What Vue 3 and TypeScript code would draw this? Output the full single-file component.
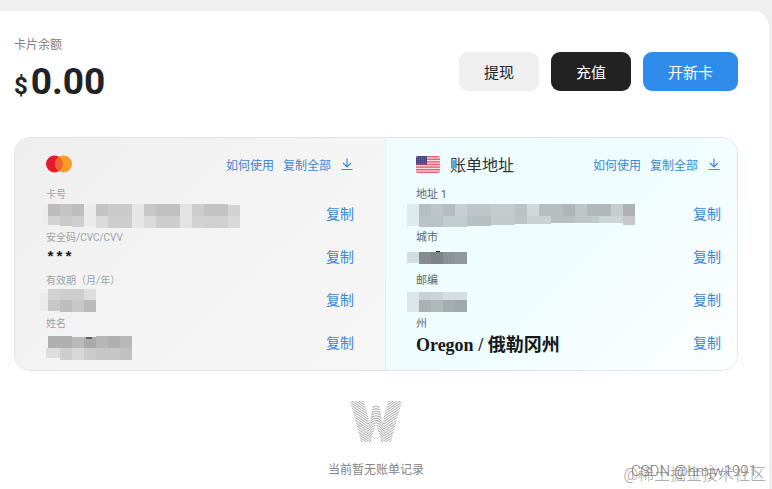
<script setup lang="ts">
type Block = [x: number, y: number, w: number, h: number, fill: string]

interface Field {
  label: string
  text?: string
  kind?: 'dots' | 'state'
  mask?: Block[]
}

const cardFields: Field[] = [
  {
    label: '卡号',
    mask: [
      [-4, 4, 6, 18, '#ececec'], [2, 2, 12, 12, '#bcbcbd'], [14, 2, 12, 12, '#c4c4c5'], [26, 2, 12, 12, '#bebebf'],
      [2, 14, 12, 9, '#d2d2d2'], [14, 14, 12, 10, '#cacaca'], [26, 14, 12, 11, '#cfcfcf'], [38, 2, 12, 22, '#ebebeb'],
      [50, 2, 12, 12, '#c3c3c3'], [62, 2, 24, 12, '#cacaca'], [50, 14, 12, 12, '#dadada'], [62, 14, 24, 12, '#cdcdcd'],
      [86, 2, 12, 24, '#e6e6e6'], [98, 2, 12, 12, '#c7c7c7'], [110, 2, 24, 12, '#c0c0c0'],
      [98, 14, 12, 12, '#dadada'], [110, 14, 24, 12, '#cdcdcd'], [134, 2, 12, 24, '#e3e3e3'],
      [146, 2, 12, 12, '#cdcdcd'], [146, 14, 12, 12, '#d2d2d2'], [158, 2, 24, 12, '#c3c3c3'], [158, 14, 24, 12, '#d0d0d0'],
      [182, 3, 12, 11, '#d2d2d2'], [182, 14, 12, 12, '#d9d9d9'],
    ],
  },
  { label: '安全码/CVC/CVV', text: '***', kind: 'dots' },
  {
    label: '有效期（月/年）',
    mask: [
      [-6, 5, 8, 18, '#ebebeb'], [2, 1, 12, 12, '#d1d1d1'], [14, 1, 24, 12, '#cdcdcd'], [38, 1, 12, 12, '#dddddd'],
      [2, 12, 12, 11, '#c6c6c6'], [14, 12, 12, 12, '#bebebe'], [26, 12, 12, 12, '#c8c8c8'], [38, 12, 12, 12, '#bababa'],
    ],
  },
  {
    label: '姓名',
    mask: [
      [2, 5, 24, 12, '#b0b0b0'], [26, 6, 12, 11, '#bababa'], [38, 6, 12, 11, '#aaaaaa'], [40, 6, 6, 2, '#626262'],
      [50, 5, 12, 12, '#b7b7b7'], [62, 5, 12, 12, '#afafaf'], [74, 5, 12, 12, '#b8b8b8'],
      [0, 17, 14, 10, '#dddddd'], [14, 17, 12, 12, '#cdcdcd'], [26, 17, 12, 12, '#d8d8d8'], [38, 17, 12, 12, '#cccccc'],
      [50, 17, 24, 12, '#c6c6c6'], [74, 17, 12, 12, '#c0c0c0'],
    ],
  },
]

const addressFields: Field[] = [
  {
    label: '地址 1',
    mask: [
      [-9, 2, 12, 22, '#dfeaec'], [3, 2, 12, 12, '#b5bec0'], [15, 2, 12, 12, '#bcc6c8'], [27, 2, 12, 12, '#b4bdbf'],
      [39, 2, 12, 12, '#c6d0d2'], [51, 2, 24, 12, '#bdc7c9'], [75, 2, 24, 12, '#c2cccd'], [99, 2, 12, 12, '#b9c2c4'],
      [111, 2, 12, 12, '#cfd9da'], [123, 2, 24, 12, '#b7bebf'], [147, 2, 12, 12, '#b0b6b7'], [159, 2, 12, 12, '#bfc6c7'],
      [171, 2, 24, 12, '#b2b7b8'], [195, 2, 12, 12, '#c7cccd'], [207, 2, 12, 12, '#adb2b3'],
      [3, 14, 24, 11, '#b8c3c4'], [27, 14, 24, 11, '#c1cccd'], [51, 14, 24, 10, '#b7c1c2'], [75, 14, 24, 9, '#c1cbcc'],
      [99, 14, 12, 8, '#bcc5c6'], [111, 14, 24, 8, '#c9d2d3'], [135, 14, 24, 7, '#b7bebf'], [159, 14, 24, 7, '#c2c8c9'],
      [183, 14, 24, 7, '#cdd4d5'], [207, 14, 12, 9, '#c3c9ca'],
    ],
  },
  {
    label: '城市',
    mask: [
      [-9, 7, 12, 11, '#d3dcde'], [3, 7, 12, 12, '#858b8d'], [15, 7, 12, 12, '#7d8486'], [27, 7, 12, 12, '#8d9395'],
      [39, 7, 12, 12, '#92999b'], [20, 6, 4, 1, '#20282b'],
    ],
  },
  {
    label: '邮编',
    mask: [
      [-9, 4, 12, 20, '#dce6e8'], [3, 4, 12, 8, '#c8d2d4'], [15, 4, 12, 8, '#cbd5d7'], [27, 4, 24, 8, '#d4dddf'],
      [3, 12, 12, 12, '#a8b1b3'], [15, 12, 12, 12, '#b0b8ba'], [27, 12, 12, 12, '#a4acae'], [39, 12, 12, 12, '#a1a8aa'],
    ],
  },
  { label: '州', text: 'Oregon / 俄勒冈州', kind: 'state' },
]

const panels = [
  { id: 'bank', fields: cardFields },
  { id: 'address', fields: addressFields },
]

const waves = Array.from({ length: 26 }, (_, i) => {
  const y = i * 2.4 - 16
  return `M-4 ${y}L18 ${y + 15}Q26 ${y + 3} 34 ${y + 15}L56 ${y}`
})
</script>

<template>
  <main class="page">
    <header class="top">
      <div>
        <div class="caption">卡片余额</div>
        <div class="amount"><span class="currency">$</span>0.00</div>
      </div>
      <div class="actions">
        <button type="button" class="btn light">提现</button>
        <button type="button" class="btn dark">充值</button>
        <button type="button" class="btn blue">开新卡</button>
      </div>
    </header>

    <section class="card">
      <div v-for="panel in panels" :key="panel.id" class="panel" :class="panel.id">
        <div class="head">
          <svg v-if="panel.id === 'bank'" class="brand" viewBox="0 0 26 18" aria-hidden="true">
            <circle cx="8.5" cy="9" r="8.5" fill="#e31b2d" />
            <circle cx="17.5" cy="9" r="8.5" fill="#fb9d2b" />
            <path d="M13 1.8a8.5 8.5 0 0 1 0 14.4a8.5 8.5 0 0 1 0-14.4z" fill="#f2642b" />
          </svg>
          <template v-else>
            <svg class="flag" viewBox="0 0 24 17" aria-hidden="true">
              <clipPath id="flag-shape"><rect width="24" height="17" rx="2" /></clipPath>
              <g clip-path="url(#flag-shape)">
                <rect width="24" height="17" fill="#f8dce1" />
                <rect v-for="n in 7" :key="n" y="0" width="24" height="1.4" :transform="`translate(0 ${(n - 1) * 2.6})`" fill="#e4616f" />
                <rect width="11" height="8.6" fill="#46477f" />
                <g fill="#a9a9cb">
                  <template v-for="r in 4" :key="r">
                    <circle v-for="c in 5" :key="c" :cx="c * 2 - 0.8" :cy="r * 2 - 0.8" r="0.4" />
                  </template>
                </g>
              </g>
            </svg>
            <h2 class="title">账单地址</h2>
          </template>
          <nav class="links">
            <a href="#">如何使用</a>
            <a href="#">复制全部</a>
            <button type="button" class="download" aria-label="下载">
              <svg viewBox="0 0 12 12" aria-hidden="true">
                <path d="M6 .5V9M2 5L6 9L10 5M.5 11.5H11.500" fill="none" stroke="currentColor" stroke-width="1.2" />
              </svg>
            </button>
          </nav>
        </div>

        <dl class="fields">
          <div v-for="field in panel.fields" :key="field.label" class="field">
            <dt>{{ field.label }}</dt>
            <dd>
              <svg v-if="field.mask" class="mask" aria-hidden="true">
                <rect
                  v-for="(b, i) in field.mask"
                  :key="i"
                  :x="b[0]"
                  :y="b[1]"
                  :width="b[2]"
                  :height="b[3]"
                  :fill="b[4]"
                />
              </svg>
              <span v-else class="value" :class="field.kind">{{ field.text }}</span>
              <button type="button" class="copy">复制</button>
            </dd>
          </div>
        </dl>
      </div>
    </section>

    <section class="empty">
      <svg class="logo" viewBox="0 0 52 41" aria-hidden="true">
        <clipPath id="w-shape">
          <path d="M0 0H14L19.500 22L23 4H29L32.500 22L38 0H52L41 41H31L26 22L21 41H11Z" />
        </clipPath>
        <g clip-path="url(#w-shape)" fill="none" stroke="#8f8f8f" stroke-width="0.8">
          <path v-for="d in waves" :key="d" :d="d" />
        </g>
      </svg>
      <p>当前暂无账单记录</p>
    </section>

    <div class="mark community">@稀土掘金技术社区</div>
    <div class="mark author">CSDN @hmjw1991</div>
  </main>
</template>

<style>
body {
  background: #efefef;
}
</style>

<style scoped>
.page {
  position: relative;
  box-sizing: border-box;
  min-height: calc(100vh - 11px);
  margin: 11px 3px 0 0;
  padding: 26px 31px 0 14px;
  border-radius: 0 16px 0 0;
  background: #fff;
  color: #202326;
  font-family: Roboto, "Noto Sans CJK SC", sans-serif;
}

button {
  padding: 0;
  border: 0;
  background: none;
  font: inherit;
  cursor: pointer;
}

.top {
  display: flex;
  align-items: center;
  justify-content: space-between;
  margin-bottom: 31px;
}

.caption {
  margin-bottom: 5px;
  color: #808080;
  font-size: 12px;
  line-height: 16px;
}

.amount {
  display: flex;
  align-items: baseline;
  gap: 3px;
  height: 48px;
  font-size: 37px;
  font-weight: 700;
  line-height: 48px;
}

.currency {
  font-size: 24px;
}

.actions {
  display: flex;
  gap: 12px;
}

.btn {
  height: 39px;
  padding: 0 25px;
  border-radius: 9px;
  font-size: 15px;
}

.light {
  background: #efefef;
  color: #252525;
}

.dark {
  background: #222;
  color: #fff;
}

.blue {
  background: #2f8ceb;
  color: #fff;
}

.card {
  display: grid;
  grid-template-columns: 371fr 353fr;
  overflow: hidden;
  border: 1px solid #e1e5e8;
  border-radius: 16px;
}

.panel {
  padding: 13px 31px 15px;
}

.bank {
  background: linear-gradient(135deg, #eeeeee, #f4f4f4 50%, #f6f6f6);
}

.address {
  padding-right: 16px;
  padding-left: 30px;
  border-left: 1px solid #e6f0f3;
  background: linear-gradient(135deg, #effbfd, #effdff 50%, #fdfeff);
}

.head {
  display: flex;
  align-items: center;
  height: 26px;
  margin-bottom: 11px;
}

.brand {
  width: 26px;
  height: 18px;
}

.flag {
  width: 24px;
  height: 17px;
}

.title {
  margin: 0 0 0 10px;
  color: #2b3336;
  font-size: 16px;
  font-weight: 400;
}

.links {
  display: flex;
  align-items: center;
  gap: 9px;
  margin-left: auto;
  font-size: 12px;
}

.links a {
  color: #3d86d3;
  text-decoration: none;
}

.download {
  display: flex;
  padding: 0 1px;
  color: #3d86d3;
}

.download svg {
  width: 12px;
  height: 12px;
}

.fields {
  display: grid;
  gap: 5px;
  margin: 0;
}

dt {
  color: #9aa3a9;
  font-size: 10px;
  line-height: 14px;
}

.address dt {
  color: #5d686c;
  font-size: 11px;
}

dd {
  display: flex;
  align-items: center;
  justify-content: space-between;
  height: 24px;
  margin: 0;
}

.mask {
  width: 220px;
  height: 24px;
  overflow: visible;
}

.value {
  padding-top: 4px;
  color: #15191b;
  font-weight: 700;
  line-height: 20px;
}

.dots {
  font-family: "Liberation Mono", monospace;
  font-size: 15px;
}

.state {
  font-family: "Liberation Serif", "Noto Sans CJK SC", serif;
  font-size: 18px;
}

.copy {
  padding-bottom: 2px;
  color: #3d86d3;
  font-size: 14px;
}

.empty {
  display: flex;
  flex-direction: column;
  align-items: center;
  padding-top: 30px;
}

.logo {
  width: 52px;
  height: 41px;
}

.empty p {
  margin: 20px 0 0;
  color: #858585;
  font-size: 12px;
  line-height: 16px;
}

.mark {
  position: absolute;
  white-space: nowrap;
}

.community {
  right: 3px;
  bottom: 4px;
  color: #a0a0a0;
  font-size: 16px;
  font-weight: 300;
  line-height: 20px;
}

.author {
  right: 12px;
  bottom: 8px;
  color: #777;
  font-size: 15px;
  font-weight: 300;
  line-height: 20px;
}
</style>
